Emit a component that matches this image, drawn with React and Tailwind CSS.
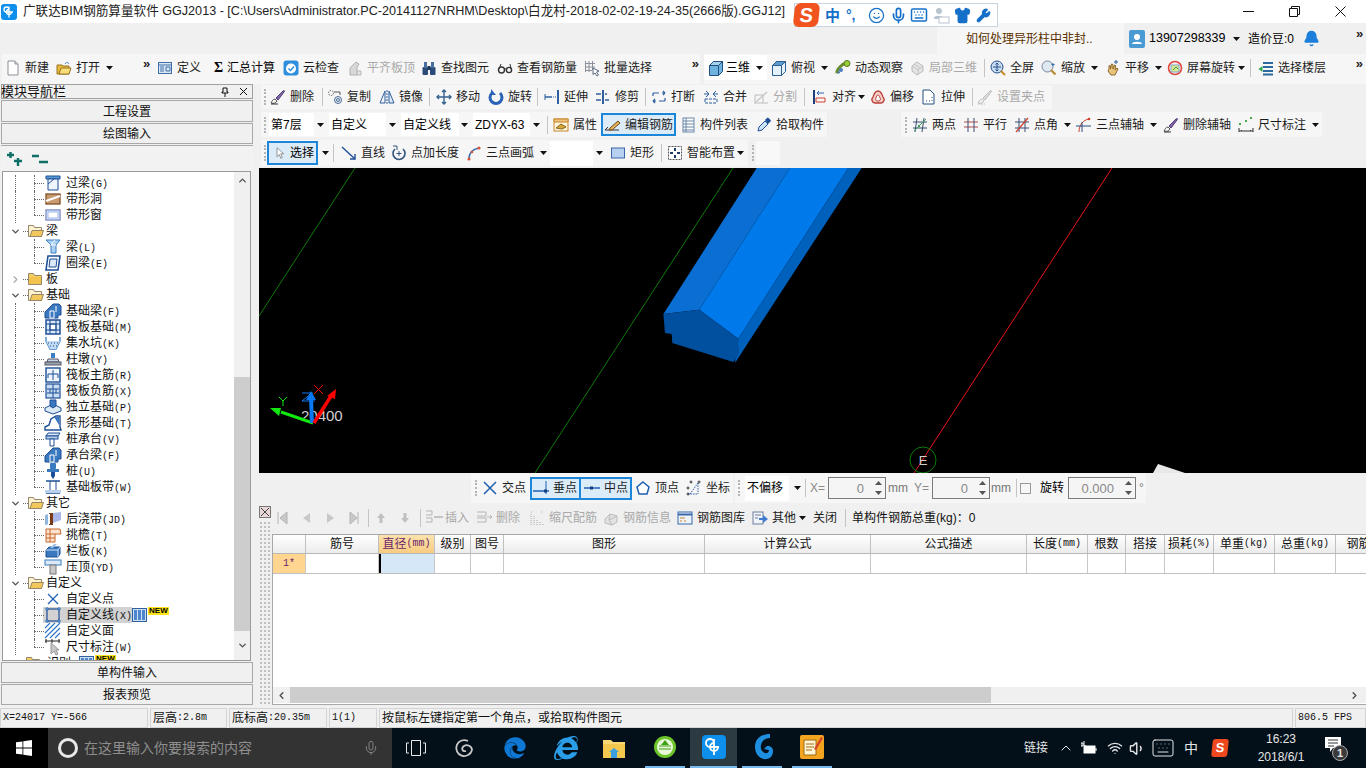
import React from "react";
import { ChevronDown, ChevronRight, ChevronUp, ChevronLeft, Wifi, Volume1, Keyboard, Mic, Bell, Smile, Shirt, Wrench } from "lucide-react";
import { FaEdge, FaInternetExplorer } from "react-icons/fa";

const B = "#2f5f9e";
const G = "#b5b5b5";

// toolbar icons, all on a 16x16 box
const IC = {
  new: <><path d="M3 1h7l3 3v11H3z" fill="#fff" stroke="#8a8f99" /><path d="M10 1v3h3" fill="#dde" stroke="#8a8f99" /></>,
  open: <><path d="M1 5h5l1 1h6v8H1z" fill="#e8b93c" stroke="#9a7420" /><path d="M3 14l2-6h10l-2 6z" fill="#f7dc7c" stroke="#9a7420" /><path d="M9 4c1-2 3-2 4 0" stroke="#3a7bd0" fill="none" /></>,
  define: <><rect x="1.5" y="2.5" width="13" height="11" fill="#dbe8f6" stroke="#3f6fa8" /><path d="M1.5 5h13M3 7h4M3 9h4M3 11h4M9 7h4v4H9z" stroke="#3f6fa8" fill="none" /></>,
  cloud: <><rect x="0.5" y="0.5" width="15" height="15" rx="3" fill="#2f8fdc" /><circle cx="8" cy="8.5" r="5" fill="#fff" /><path d="M5.5 8.5l2 2 3.5-4" stroke="#2f8fdc" strokeWidth="1.5" fill="none" /></>,
  flat: <><path d="M3 15V8l6-6 3 2-2 3v8z" fill="#d8d8d8" stroke="#b0b0b0" /><path d="M10 15v-4h4v4z" fill="#e4e4e4" stroke="#b8b8b8" /></>,
  binoc: <><rect x="1.5" y="7" width="5.5" height="8" rx="1" fill="#2b4c7a" /><rect x="9" y="7" width="5.5" height="8" rx="1" fill="#2b4c7a" /><rect x="3" y="2" width="3" height="6" fill="#4a6e9e" /><rect x="10" y="2" width="3" height="6" fill="#4a6e9e" /><rect x="6.5" y="6" width="3" height="4" fill="#1d3557" /></>,
  glass: <><circle cx="4.5" cy="10" r="3" fill="none" stroke="#333" strokeWidth="1.4" /><circle cx="12" cy="10" r="2.6" fill="none" stroke="#333" strokeWidth="1.4" /><path d="M7 9h2.5M2 9l2-5M14 9l-1-5" stroke="#333" fill="none" /></>,
  batch: <><path d="M1.5 1v11M5 1v11M8.5 1v9M1 3.5h10M1 7h10M1 10.5h7" stroke="#8a8f99" fill="none" /><path d="M9 8l6 3-2.5 1 2 3-1.5 1-2-3-2 1.5z" fill="#fff" stroke="#5a6a80" /></>,
  cube: <><path d="M1.5 5.5l4-4h9v10l-4 4h-9z" fill="#6fb2de" stroke="#22507e" /><path d="M1.5 5.5h9v10M10.5 5.5l4-4" fill="none" stroke="#22507e" /><path d="M1.5 5.5l4-4h9l-4 4z" fill="#a6d2ee" stroke="#22507e" /></>,
  top: <><path d="M1.5 5.5l4-4h9v10l-4 4h-9z" fill="#e4f0fa" stroke="#2d5f8f" /><path d="M1.5 5.5h9v10M10.5 5.5l4-4" fill="none" stroke="#2d5f8f" /><path d="M5.5 1.5l-4 4h9l4-4z" fill="#5c9bd0" stroke="#2d5f8f" /></>,
  orbit: <><path d="M2 13c-1-3 5-9 9-10" stroke="#6a8d2e" strokeWidth="3" fill="none" /><circle cx="12" cy="3.5" r="3" fill="#9ccd3a" stroke="#55761d" /><path d="M2 14l3-1-1-3z" fill="#3d6a9e" /><circle cx="6" cy="10" r="2" fill="#4d7dbd" /></>,
  orbit0: <><path d="M3 6l5-4 6 4v5l-6 4-5-4z" fill="#e4e4e4" stroke="#bcbcbc" /><path d="M3 6l6 4 5-4M9 10v5M5 4l6 4" stroke="#c4c4c4" fill="none" /></>,
  full: <><circle cx="7" cy="7" r="6" fill="#c7dbf2" stroke="#28508a" /><path d="M7 3v8M3 7h8M5.5 4.5L7 3l1.5 1.5M5.5 9.5L7 11l1.5-1.5" stroke="#28508a" fill="none" /><path d="M11 11l4 4" stroke="#c78b2a" strokeWidth="2" /></>,
  zoom: <><circle cx="6.5" cy="6.5" r="5.5" fill="#dfe7f0" stroke="#76889e" /><path d="M10 10l4.5 4.5" stroke="#b88a30" strokeWidth="2.2" /><path d="M12 3v3M10.5 4.5h3" stroke="#2f6ab0" /></>,
  pan: <><path d="M4 9V5.5l1.5.5V9l1-5 1.5.5L8 9l1.5-4 1.3.7L10 10l2-2 1 1-3 6H6L3 11z" fill="#e8c27a" stroke="#8c6a2d" /><path d="M11 0v4M9 2h4" stroke="#2f5f9e" /></>,
  rot: <><circle cx="8" cy="8" r="6.5" fill="none" stroke="#e0453a" strokeWidth="1.6" /><rect x="4" y="5" width="8" height="7" fill="#dbe58a" stroke="#7fa6cf" /><path d="M6 10l3-3 2 2" stroke="#3b9c58" fill="none" /></>,
  floor: <><path d="M5 3h10M5 7h10M5 11h10M5 14.5h10" stroke="#2b6a9e" strokeWidth="2" /><path d="M0.5 9l4-3v6z" fill="#2fa34f" /></>,
  brush: <><path d="M1 14c3 1 5 0 6-2l-2-2c-2 0-3 2-4 4z" fill="#f2f2f2" stroke="#555" /><path d="M6 9l7-7c1-1 2 0 1 1l-6 8z" fill="#8667ad" stroke="#4d3a70" /><path d="M1 15h7" stroke="#333" /></>,
  brush0: <><path d="M1 14c3 1 5 0 6-2l-2-2c-2 0-3 2-4 4z" fill="#eee" stroke="#c0c0c0" /><path d="M6 9l7-7c1-1 2 0 1 1l-6 8z" fill="#ddd" stroke="#bbb" /><path d="M1 15h7" stroke="#c0c0c0" strokeDasharray="2 1" /></>,
  copy: <><circle cx="4" cy="4" r="2.5" fill="none" stroke="#666" strokeDasharray="1.5 1" /><circle cx="11" cy="11" r="3.5" fill="#e8eef6" stroke="#4c6d95" /><circle cx="11" cy="11" r="1.5" fill="none" stroke="#4c6d95" /><path d="M7 3h6v3" stroke="#555" fill="none" /></>,
  mirror: <><path d="M6 2v12H1z" fill="none" stroke={B} /><path d="M10 2v12h5z" fill="#e0ebf6" stroke={B} /><path d="M8 1v14" stroke={B} strokeDasharray="2 1" /></>,
  move: <><path d="M8 1v14M1 8h14M6 3l2-2 2 2M6 13l2 2 2-2M3 6L1 8l2 2M13 6l2 2-2 2" stroke="#35628f" strokeWidth="1.4" fill="none" /></>,
  rotate: <><path d="M4 4a6 6 0 1 0 8 0" stroke="#2a62b8" strokeWidth="3" fill="none" /><path d="M3 0v6h5z" fill="#2a62b8" /></>,
  extend: <><path d="M1 8h7" stroke={B} strokeWidth="1.5" /><path d="M9 8h3" stroke={B} strokeDasharray="1 1" /><path d="M14 1v14" stroke={B} strokeWidth="2" /><path d="M1 5v6" stroke={B} /></>,
  trim: <><path d="M1 5h5M1 11h5M10 5h2M10 11h4" stroke={B} strokeWidth="1.4" /><path d="M8 1v14" stroke={B} strokeWidth="2" /></>,
  brk: <><path d="M2 4h6M11 4h3M14 4l-2-2M14 4l-2 2M2 4v3M2 12h3M8 12h6M14 12V9M2 12l2-2M2 12l2 2" stroke={B} fill="none" strokeWidth="1.2" /></>,
  merge: <><path d="M2 14h12M2 10h12M2 10v4M14 10v4" stroke={B} strokeDasharray="3 1" fill="none" /><path d="M3 2l3 3-3 3M13 2l-3 3 3 3M1 5h5M10 5h5" stroke={B} fill="none" /></>,
  split: <><path d="M1 14h14M2 14V6h8v8" stroke="#bdbdbd" fill="none" /><path d="M3 13l11-10" stroke="#c8c8c8" strokeWidth="1.5" /></>,
  align: <><path d="M2 1v14" stroke="#1f3f7a" strokeWidth="2" /><path d="M5 4h7M5 4l2-2M5 4l2 2" stroke="#2a62b8" fill="none" /><path d="M4 9h9v4H4z" fill="none" stroke="#d0402e" /></>,
  offset: <><path d="M8 2c3 0 4 3 5 6 2 2 1 6-2 6H5c-3 0-4-4-2-6 1-3 2-6 5-6z" fill="#f4d0cc" stroke="#bb4035" strokeWidth="1.3" /><path d="M8 6c1 0 2 2 2 3 1 1 0 3-1 3H7c-1 0-2-2-1-3 0-1 1-3 2-3z" fill="#fff" stroke="#bb4035" /></>,
  stretch: <><path d="M2 1h7l4 4v10H2z" fill="#fff" stroke="#22507e" /><path d="M11 8v1M11 11v1M8 12h1M5 12h1" stroke="#22507e" /></>,
  prop: <><rect x="1" y="2" width="14" height="12" fill="#fff4dc" stroke="#c8862a" /><path d="M1 2h14v3H1z" fill="#ecc27c" stroke="#c8862a" /><path d="M3 11l5-4 5 3-4 2z" fill="#d5a83a" stroke="#8a6520" /></>,
  edit: <><path d="M0 13h14" stroke="#333" /><path d="M0 13l3-3" stroke="#333" /><path d="M5 11l8-7 2 2-8 7-3 0z" fill="#e8b25a" stroke="#6a4a18" /></>,
  list: <><rect x="3" y="1" width="11" height="14" fill="#fff" stroke="#6a86a8" /><path d="M3 4h11M3 7h11M3 10h11M3 13h11M6 1v14" stroke="#6a86a8" /></>,
  drop: <><path d="M2 14l1-4 6-6 3 3-6 6z" fill="#cfe3f7" stroke="#1d4f96" /><path d="M9 3l2-2c1-1 3 1 4 3l-2 2-1 1z" fill="#1d4f96" /></>,
  two: <><path d="M1 5h14M1 11h14M5 1l-2 14M12 1l-2 14" stroke="#3a4f74" fill="none" /><path d="M2 14L14 2" stroke="#3f9e5a" /><circle cx="7" cy="9" r="1.2" fill="#3f9e5a" /></>,
  para: <><path d="M1 5h14M1 10h14" stroke="#b84a4a" /><path d="M5 1v14M11 1v14" stroke="#3a4f74" /></>,
  angle: <><path d="M1 5h14M1 11h14M5 1v14M11 1v14" stroke="#3a4f74" /><path d="M2 15L14 1" stroke="#d0402e" strokeWidth="1.2" /></>,
  arcax: <><path d="M3 15c0-7 4-12 10-13" stroke="#d0402e" fill="none" /><path d="M0 9h15M6 5v10" stroke="#2a4f80" /><circle cx="13" cy="2" r="1.3" fill="#d0402e" /></>,
  dim: <><path d="M1 14h14M1 11v4M15 11v4M3 14l1-1M13 14l-1-1" stroke="#333" fill="none" /><rect x="1" y="6" width="2" height="2" fill="#4aa64a" /><rect x="7" y="3" width="2" height="2" fill="#4aa64a" /><rect x="12" y="0" width="2" height="2" fill="#4aa64a" /></>,
  cursor: <path d="M4 1v12l3-3 2 5 2-1-2-5h4z" fill="#fff" stroke="#777" />,
  line: <><path d="M1 2l13 12" stroke="#1f4f96" strokeWidth="1.4" /><path d="M14 9v5H9" stroke="#1f4f96" fill="none" strokeWidth="1.4" /></>,
  pluslen: <><path d="M4 4a6 6 0 1 0 8 0" stroke="#33557f" strokeWidth="1.6" fill="none" /><path d="M2 1h4v4" stroke="#33557f" fill="none" /><path d="M8 6v5M5.5 8.5h5" stroke="#33557f" /></>,
  arc: <><path d="M3 14c0-6 4-10 10-11" stroke="#3a6fae" strokeWidth="1.5" fill="none" /><circle cx="3" cy="14" r="1.6" fill="#d8553c" /><circle cx="13" cy="3" r="1.6" fill="#d8553c" /><circle cx="6" cy="7" r="1.3" fill="#d8553c" /></>,
  rect: <rect x="1.5" y="3" width="13" height="10" fill="#b8d0f0" stroke="#3c66a8" />,
  smart: <><rect x="1.5" y="1.5" width="13" height="13" fill="#fff" stroke="#555" strokeDasharray="2 1" /><path d="M8 3v3M8 10v3M3 8h3M10 8h3" stroke="#1c3c6e" strokeWidth="2" /></>,
  cross: <path d="M2 2l12 12M14 2L2 14" stroke="#1f5fb0" strokeWidth="1.5" />,
  perp: <><path d="M0 11h16" stroke="#1f5fb0" strokeWidth="1.5" /><path d="M13 1v13" stroke="#1f5fb0" /><rect x="11" y="9.5" width="3" height="3" fill="#123f80" /></>,
  mid: <><path d="M0 8h16" stroke="#1f5fb0" strokeWidth="1.5" /><rect x="6" y="6.5" width="3" height="3" fill="#123f80" /></>,
  vertex: <path d="M8 2l6 5-2 7H4L2 7z" fill="#fff" stroke="#1f5fb0" strokeWidth="1.5" />,
  coord: <><path d="M2 14h10M4 14L12 3M12 3v11" stroke="#2f62a8" strokeDasharray="1.5 1" fill="none" /><circle cx="5" cy="2" r="1" fill="none" stroke="#333" /><circle cx="2" cy="8" r="1" fill="none" stroke="#333" /><circle cx="13" cy="2" r="1" fill="none" stroke="#333" /><circle cx="2" cy="14" r="1" fill="none" stroke="#333" /></>,
  ins: <><path d="M1 1h6v4H1M1 8h6v4H1" stroke={G} fill="none" /><path d="M9 7h9" stroke={G} strokeWidth="1.5" /></>,
  del: <><path d="M1 2h9v4H1M1 8h9v4H1" stroke={G} fill="none" /><path d="M11 7h5M14 5l2 2-2 2" stroke={G} fill="none" /></>,
  scale: <path d="M2 15V3M5 15V6M8 15V9M11 15v-4M14 15v-2M2 2h2M12 2h2" stroke="#aaa" strokeDasharray="1 1" fill="none" />,
  info: <><path d="M2 9l5-5 7 2v6l-5 3-7-2z" fill="#e2e2e2" stroke="#bbb" /><path d="M7 4l-1 6 3 5M6 10l8-4" stroke="#bbb" fill="none" /></>,
  lib: <><rect x="1" y="2" width="14" height="12" fill="#eef4fb" stroke="#3868a8" /><path d="M1 4.5h14" stroke="#3868a8" strokeWidth="2" /><path d="M3 8h5M3 11h2M7 11h2" stroke="#c8862a" /></>,
  other: <><rect x="1" y="2" width="10" height="12" fill="#f0f4fa" stroke="#6a7e9a" /><path d="M3 5h6M3 8h3" stroke="#6a7e9a" /><path d="M7 8h4V5l5 4-5 4v-3H7z" fill="#3f7bd0" /></>,
};

const Svg = ({ name, w = 16, h = 16 }) => (
  <svg viewBox="0 0 16 16" width={w} height={h} className="block shrink-0 overflow-visible">{IC[name]}</svg>
);

const Caret = ({ className = "" }) => (
  <svg width="7" height="4" viewBox="0 0 7 4" className={"block shrink-0 " + className}><path d="M0 0h7L3.5 4z" fill="#111" /></svg>
);

const Grip = ({ className = "" }) => <div className={"h-[16px] w-0 border-l-2 border-dotted border-[#b4b4b4] shrink-0 " + className} />;

const Sep = ({ w }) => (
  <div className={"h-[18px] shrink-0 " + w}><div className="h-full w-px bg-[#c4c4c4]" /></div>
);

const More = ({ className = "" }) => <span className={"text-[13px] leading-none font-bold text-[#222] shrink-0 " + className}>»</span>;

const Tool = ({ w, icon, label, gray, caret, caretMl = "ml-[6px]", className = "" }) => (
  <div className={"flex items-center shrink-0 whitespace-nowrap " + w + " " + (gray ? "text-[#a9a9a9] " : "text-[#1c1c1c] ") + className}>
    {icon && <span className="mr-[4px]"><Svg name={icon} /></span>}
    <span>{label}</span>
    {caret && <Caret className={caretMl} />}
  </div>
);

const Combo = ({ w1, w2, label }) => (
  <div className="flex items-center h-[23px] mr-[3px] shrink-0">
    <div className={"h-full bg-white flex items-center pl-[2px] " + w1}>{label}</div>
    <div className={"h-full bg-[#f6f6f6] flex items-center justify-center " + w2}><Caret /></div>
  </div>
);

const Mix = ({ t }) => (
  <>
    {t.split(/([\x00-\x7f]+)/).map((p, i) =>
      /^[\x00-\x7f]+$/.test(p)
        ? <span key={i} className="font-['Liberation_Mono',monospace] text-[10px]">{p}</span>
        : <span key={i}>{p}</span>
    )}
  </>
);

// tree icons
const TI = {
  lintel: <><path d="M1 1h14v3H1z" fill="#5b9bd5" stroke="#1d4f96" /><path d="M3 4h10v11H3z" fill="#eef5fc" stroke="#1d4f96" /><path d="M3 9l6-5" stroke="#1d4f96" /></>,
  hole: <><rect x="0" y="2" width="16" height="12" fill="#f3d8c8" /><rect x="1" y="3" width="14" height="10" fill="#c99a70" stroke="#6b3d1a" /><path d="M1 10l14-5" stroke="#fff" strokeWidth="2" /></>,
  win: <><rect x="0" y="2" width="16" height="12" fill="#f8d8d0" /><rect x="1" y="3" width="14" height="10" fill="#dfe9fb" stroke="#5c80cc" /><rect x="3" y="5" width="10" height="6" fill="#fff" stroke="#9fb8e8" /></>,
  beam: <><path d="M1 1h14l-4 5v8H6V6z" fill="#a8d0f0" stroke="#3b7fc4" /><path d="M6 6h5M10 1L6 6" stroke="#fff" /></>,
  ring: <><path d="M3 1h12l-2 14H1z" fill="#fff" stroke="#1d4f96" strokeWidth="1.6" /><path d="M5 4h7l-1 8H4z" fill="#dce9f7" stroke="#1d4f96" /></>,
  fbeam: <><path d="M0 15V9l8-8h6l2 2v9h-3v3z" fill="#3a78c0" stroke="#1d4f96" /><path d="M5 15V8h4v7zM11 3v6" stroke="#fff" fill="none" /></>,
  raft: <><rect x="1" y="1" width="14" height="14" fill="#dce9f7" stroke="#1d4f96" strokeWidth="1.5" /><rect x="5" y="5" width="6" height="6" fill="#fff" stroke="#1d4f96" /><path d="M1 5h14M1 11h14M5 1v14M11 1v14" stroke="#1d4f96" /></>,
  pit: <><path d="M1 2v4l4 8h6l4-8V2" fill="none" stroke="#3b7fc4" strokeWidth="1.3" /><path d="M1 6h14l-4 8H5z" fill="#bfdaf2" /><path d="M3 8h1M6 8h1M9 8h1M12 8h1M5 11h1M8 11h1M11 11h1" stroke="#1d4f96" /></>,
  pier: <><path d="M6 2h4v5H6z" fill="#3b7fc4" /><path d="M3 8h10l1 3H2z" fill="#c8d6e6" stroke="#556" /><rect x="0" y="11" width="16" height="3" fill="#9aa5b0" stroke="#556" /></>,
  main: <><rect x="1" y="1" width="14" height="14" fill="#eef5fc" stroke="#1d4f96" strokeWidth="1.4" /><path d="M8 3v10M3 7h10M3 7v4M13 7v4" stroke="#1d4f96" fill="none" /></>,
  neg: <><rect x="1" y="1" width="14" height="14" fill="#c9dcf2" stroke="#1d4f96" strokeWidth="1.2" /><path d="M8 1v14M2 6h12M2 10h12M5 6v4M11 6v4" stroke="#1d4f96" fill="none" /></>,
  ind: <><path d="M0 9l8-4 8 4v3l-8 3-8-3z" fill="#dce9f7" stroke="#1d4f96" /><path d="M5 7V1h6v6l-3 2z" fill="#3a78c0" stroke="#1d4f96" /></>,
  strip: <><path d="M0 15v-3l4-2 2-6 5-3 4 0v11l1 3z" fill="#fff" stroke="#1d4f96" strokeWidth="1.4" /><path d="M9 2l5 0v8z" fill="#3a78c0" /></>,
  cap: <><path d="M1 5l2-3h12l-2 3z" fill="#dce9f7" stroke="#1d4f96" /><rect x="1" y="5" width="12" height="3" fill="#b8d0ea" stroke="#1d4f96" /><path d="M5 8h4v7H5z" fill="#fff" stroke="#1d4f96" /></>,
  pile: <><rect x="5" y="0" width="6" height="6" rx="1" fill="#3a78c0" /><path d="M2 6h12v3H2z" fill="#3a78c0" /><path d="M6 9h4v4l-2 3-2-3z" fill="#1d4f96" /></>,
  band: <><path d="M1 2h14M1 14h14" stroke="#1d4f96" strokeWidth="1.6" /><path d="M5 2v12M11 2v12" stroke="#1d4f96" /><path d="M0 11h16v3H0z" fill="#b8d0ea" /></>,
  post: <><path d="M0 4l8-2v10l-8 2z" fill="#8fb6dd" /><path d="M8 2l8-1v8l-8 3z" fill="#a8b8e8" /><rect x="4" y="2" width="4" height="12" fill="#7a3b18" /><rect x="3" y="3" width="2" height="10" fill="#fff" /></>,
  eave: <><path d="M1 2h14l1 5h-6v8H1z" fill="#fbe3d0" stroke="#c8672a" /><path d="M1 7h9M1 11h9M5 2v13" stroke="#c8672a" /></>,
  rail: <><path d="M1 7l3-3h11v7l-2 3H1z" fill="#3a78c0" stroke="#1d4f96" /><path d="M1 7h12v7M13 7l2-3" stroke="#cfe3f7" fill="none" /><path d="M5 5l4-4h3L8 5z" fill="#9ac0e8" /></>,
  press: <><rect x="0" y="1" width="16" height="5" fill="#dbe9f8" stroke="#3b7fc4" /><rect x="5" y="6" width="6" height="9" fill="#c8c8c8" stroke="#777" /></>,
  pt: <path d="M3 3l10 10M13 3L3 13" stroke="#1d5fb0" strokeWidth="1.2" />,
  ln: <><rect x="2" y="2" width="12" height="12" fill="none" stroke="#1d4f96" strokeWidth="1.2" /><path d="M1 1h2v2H1zM13 1h2v2h-2zM1 13h2v2H1zM13 13h2v2h-2z" fill="#fff" stroke="#1d5fb0" /></>,
  face: <path d="M0 5l5-5M0 10L10 0M0 15L15 0M5 15L15 5M10 15l5-5" stroke="#2a72c8" strokeWidth="1.1" />,
  dimt: <><path d="M0 2h15M1 0v4M7 0v4M14 0v4" stroke="#222" /><path d="M6 4v11l3-3 2 4 2-1-2-4h3z" fill="#c8c8c8" stroke="#999" /></>,
};

const Folder = ({ open }) => (
  <svg width="16" height="14" viewBox="0 0 16 14" className="block shrink-0">
    <path d="M0.5 1.5h5l1 2h7v9h-13z" fill={open ? "#fff3cf" : "#f3cf63"} stroke="#97876a" />
    {open
      ? <path d="M2 12.5l2-6h11.500l-2 6z" fill="#f4c75a" stroke="#97876a" />
      : <path d="M1 5h12v7H1z" fill="#f2c44d" />}
  </svg>
);

const guide = "border-l border-dotted border-[#6a6a6a]";

const Child = ({ icon, t, g1 = true, last, sel, extra }) => (
  <div className="flex items-center h-[16px] whitespace-nowrap">
    <div className="w-[12px] shrink-0" />
    <div className={"w-[19px] h-full shrink-0 " + (g1 ? guide : "")} />
    <div className="w-[11px] h-full shrink-0 relative">
      <div className={"h-1/2 " + guide} />
      {!last && <div className={"h-1/2 " + guide} />}
      <div className="absolute left-0 top-1/2 w-[10px] border-t border-dotted border-[#6a6a6a]" />
    </div>
    <div className={"flex items-center h-full " + (sel ? "bg-[#d2d2d2] -ml-[2px] pl-[2px]" : "")}>
      <svg width="16" height="16" viewBox="0 0 16 16" className="block shrink-0 overflow-visible">{TI[icon]}</svg>
      <span className="ml-[5px] text-[#111]"><Mix t={t} /></span>
    </div>
    {extra}
  </div>
);

const NewTag = () => (
  <>
    <div className="w-[15px] h-[14px] border border-[#2f5f9e] bg-[#cfe0f5] flex justify-around px-px py-px shrink-0">
      <div className="w-[3px] bg-[#4d86cc]" /><div className="w-[3px] bg-[#4d86cc]" /><div className="w-[3px] bg-[#4d86cc]" />
    </div>
    <span className="ml-px -translate-y-[4px] bg-[#ffe31a] text-black text-[8px] leading-[8px] font-bold px-px font-['Liberation_Sans',sans-serif]">NEW</span>
  </>
);

const Group = ({ t, open = true }) => (
  <div className="flex items-center h-[16px] whitespace-nowrap">
    <div className="w-[7px] shrink-0" />
    {open
      ? <ChevronDown size={11} strokeWidth={3} className="shrink-0 text-[#505050]" />
      : <ChevronRight size={11} strokeWidth={3} className="shrink-0 text-[#b0b0b0]" />}
    <div className="w-[5px] ml-[2px] border-t border-dotted border-[#6a6a6a] shrink-0" />
    <Folder open={open} />
    <span className="ml-[2px] text-[#111]">{t}</span>
  </div>
);

const PanelBtn = ({ t, h }) => (
  <div className={"flex items-center justify-center border border-[#a8a8a8] bg-[#f0f0f0] text-[#111] mx-px mb-px pt-px " + h}>{t}</div>
);

const NavTree = () => (
  <div className="w-[254px] shrink-0 flex flex-col h-[622px]">
    <div className="h-[15px] border border-[#a0a0a0] mx-px flex items-center justify-between pr-[4px] text-[#111] text-[13px] leading-none mb-[1px]">
      <span className="-ml-[1px]">模块导航栏</span>
      <div className="flex items-center gap-[10px]">
        <svg width="8" height="10" viewBox="0 0 8 10"><path d="M2 1h4v4h1v1H1V5h1zM4 6v4" stroke="#111" fill="none" /></svg>
        <svg width="9" height="9" viewBox="0 0 9 9"><path d="M1 1l7 7M8 1L1 8" stroke="#111" /></svg>
      </div>
    </div>
    <PanelBtn t="工程设置" h="h-[22px]" />
    <PanelBtn t="绘图输入" h="h-[21px]" />
    <div className="h-[26px] mx-px flex items-center gap-[7px] pl-[5px] border-t border-[#a8a8a8] bg-[#f2f2f2]">
      <svg width="18" height="16" viewBox="0 0 18 16"><path d="M1 4h7M4.500 1v6M8 10h8M12 7v8" stroke="#0f6f66" strokeWidth="2.400" /></svg>
      <svg width="18" height="16" viewBox="0 0 18 16"><path d="M1 5h7M8 11h9" stroke="#0f6f66" strokeWidth="2.400" /></svg>
    </div>
    <div className="flex-1 min-h-0 ml-[2px] mr-[3px] border border-[#9a9a9a] bg-white flex overflow-hidden">
      <div className="flex-1 min-w-0 pt-[3px] overflow-hidden">
        <Child icon="lintel" t="过梁(G)" />
        <Child icon="hole" t="带形洞" />
        <Child icon="win" t="带形窗" last />
        <Group t="梁" />
        <Child icon="beam" t="梁(L)" g1={false} />
        <Child icon="ring" t="圈梁(E)" g1={false} last />
        <Group t="板" open={false} />
        <Group t="基础" />
        <Child icon="fbeam" t="基础梁(F)" />
        <Child icon="raft" t="筏板基础(M)" />
        <Child icon="pit" t="集水坑(K)" />
        <Child icon="pier" t="柱墩(Y)" />
        <Child icon="main" t="筏板主筋(R)" />
        <Child icon="neg" t="筏板负筋(X)" />
        <Child icon="ind" t="独立基础(P)" />
        <Child icon="strip" t="条形基础(T)" />
        <Child icon="cap" t="桩承台(V)" />
        <Child icon="fbeam" t="承台梁(F)" />
        <Child icon="pile" t="桩(U)" />
        <Child icon="band" t="基础板带(W)" last />
        <Group t="其它" />
        <Child icon="post" t="后浇带(JD)" />
        <Child icon="eave" t="挑檐(T)" />
        <Child icon="rail" t="栏板(K)" />
        <Child icon="press" t="压顶(YD)" last />
        <Group t="自定义" />
        <Child icon="pt" t="自定义点" />
        <Child icon="ln" t="自定义线(X)" sel extra={<NewTag />} />
        <Child icon="face" t="自定义面" />
        <Child icon="dimt" t="尺寸标注(W)" last />
        <div className="flex items-center h-[16px] whitespace-nowrap">
          <div className="w-[23px] shrink-0" /><Folder open={false} /><span className="ml-[5px] text-[#111]">识别</span>
          <span className="ml-[8px] flex items-center"><NewTag /></span>
        </div>
      </div>
      <div className="w-[16px] shrink-0 bg-[#f0f0f0] flex flex-col items-center">
        <div className="h-[205px] w-full pt-[3px] flex justify-center"><ChevronUp size={11} strokeWidth={3} className="text-[#505050]" /></div>
        <div className="h-[254px] w-full bg-[#cdcdcd]" />
        <div className="flex-1 w-full flex items-center justify-center"><ChevronDown size={11} strokeWidth={3} className="text-[#505050]" /></div>
      </div>
    </div>
    <div className="mt-px" />
    <PanelBtn t="单构件输入" h="h-[21px]" />
    <PanelBtn t="报表预览" h="h-[21px]" />
  </div>
);

const Canvas = () => (
  <svg width="1107" height="305" viewBox="0 0 1107 305" className="block bg-black shrink-0">
    <path d="M96 0L0 148" stroke="#0c7a0c" fill="none" />
    <path d="M474 0L276 305" stroke="#0c7a0c" fill="none" />
    <path d="M853 0L655 305" stroke="#e8141a" fill="none" />
    <polygon points="497.700,0 531,0 440.300,141.700 404.400,146" fill="#0a6ed2" />
    <polygon points="531,0 589.300,0 479.300,170.700 440.300,141.700" fill="#0079ea" />
    <polygon points="589.300,0 602.700,0 476,195 479.300,170.700" fill="#0061bd" />
    <polygon points="404.400,146 440.300,141.700 479.300,170.700 480,186.700 474.300,194 413.300,175 412.700,166 406,165" fill="#00509f" />
    <circle cx="664" cy="292" r="13" fill="none" stroke="#0c7a0c" />
    <text x="664" y="297" textAnchor="middle" fontSize="13" fill="#cfcfcf" fontFamily="Liberation Sans, sans-serif">E</text>
    <polygon points="894,305 899,296 926,305" fill="#e8e8e8" />
    <text x="42" y="253" fontSize="15" fill="#d0d0d0" fontFamily="Liberation Sans, sans-serif">20400</text>
    <path d="M22 244l32 11" stroke="#10e810" strokeWidth="3" />
    <polygon points="11,240 22,240 20,248" fill="#10e810" />
    <path d="M53 255l-1-25" stroke="#0a78f0" strokeWidth="4" />
    <polygon points="52,223 47,232 57,232" fill="#0a78f0" />
    <path d="M55 255l17-27" stroke="#f00" strokeWidth="3.500" />
    <polygon points="77,221 68,228 76,231" fill="#f00" />
    <path d="M20 229l4 4 4-4M24 233v5" stroke="#10e810" fill="none" />
    <path d="M55 217l9 9M64 217l-9 9" stroke="#f00" fill="none" />
    <path d="M43 225h11M43 233l10-8M43 233h13" stroke="#0a78f0" fill="none" />
  </svg>
);

const Num = ({ w, v }) => (
  <div className={"h-[22px] border border-[#7a7a7a] bg-[#f5f5f5] flex items-center justify-end shrink-0 text-[#8a8a8a] text-[13px] " + w}>
    <span>{v}</span>
    <div className="w-[14px] ml-[7px] flex flex-col items-center gap-[6px]">
      <svg width="7" height="4" viewBox="0 0 7 4"><path d="M0 4h7L3.500 0z" fill="#555" /></svg>
      <svg width="7" height="4" viewBox="0 0 7 4"><path d="M0 0h7L3.500 4z" fill="#555" /></svg>
    </div>
  </div>
);

const SnapBar = () => (
  <div className="h-[32px] shrink-0 flex pl-[212px] items-start">
    <div className="h-[30px] w-[262px] bg-[#f6f6f6] flex items-center pl-[4px] shrink-0">
      <Grip />
      <div className="w-[5px]" />
      <Tool w="w-[48px]" icon="cross" label="交点" />
      <div className="h-[23px] w-[51px] border-2 border-[#1c86d8] bg-[#dcebf8] flex items-center pl-[1px] shrink-0"><Tool w="" icon="perp" label="垂点" /></div>
      <div className="h-[23px] w-[51px] border-2 border-l-0 border-[#1c86d8] bg-[#dcebf8] flex items-center pl-[3px] shrink-0"><Tool w="" icon="mid" label="中点" /></div>
      <Tool w="w-[54px] pl-[3px]" icon="vertex" label="顶点" />
      <Tool w="w-[44px]" icon="coord" label="坐标" />
    </div>
    <div className="h-[30px] bg-[#f6f6f6] flex items-center ml-[2px] pl-[3px] flex-1 mr-[220px] min-w-0">
      <Grip />
      <div className="w-[5px]" />
      <div className="w-[44px] h-[25px] bg-white flex items-center pl-[2px] shrink-0">不偏移</div>
      <div className="w-[16px] flex justify-center shrink-0 -ml-[1px]"><Caret className="ml-[3px]" /></div>
      <div className="h-[18px] w-px bg-[#c4c4c4] ml-[1px] mr-[4px] shrink-0" />
      <span className="w-[18px] text-[#8a8a8a] shrink-0">X=</span>
      <Num w="w-[58px]" v="0" />
      <span className="w-[28px] pl-[2px] text-[#777] shrink-0">mm</span>
      <span className="w-[18px] text-[#8a8a8a] shrink-0">Y=</span>
      <Num w="w-[58px]" v="0" />
      <span className="w-[26px] pl-px text-[#777] shrink-0">mm</span>
      <div className="h-[18px] w-px bg-[#c4c4c4] mr-[3px] shrink-0" />
      <div className="w-[11px] h-[11px] border border-[#999] bg-[#f6f6f6] mr-[9px] shrink-0" />
      <span className="w-[28px] shrink-0">旋转</span>
      <Num w="w-[68px]" v="0.000" />
      <span className="ml-[3px] text-[#777] shrink-0">°</span>
    </div>
  </div>
);

const COLS = [
  ["w-[33px]", ""], ["w-[73px]", "筋号"], ["w-[56px]", "直径(mm)"], ["w-[36px]", "级别"], ["w-[33px]", "图号"],
  ["w-[201px]", "图形"], ["w-[166px]", "计算公式"], ["w-[156px]", "公式描述"], ["w-[61px]", "长度(mm)"], ["w-[38px]", "根数"],
  ["w-[39px]", "搭接"], ["w-[49px]", "损耗(%)"], ["w-[61px]", "单重(kg)"], ["w-[61px]", "总重(kg)"], ["w-[46px]", "钢筋"],
];

const GridPanel = () => (
  <div className="flex h-[201px] shrink-0">
    <div className="w-[13px] shrink-0 flex flex-col">
      <svg width="13" height="13" viewBox="0 0 13 13" className="shrink-0 mt-px"><rect x="0.500" y="0.500" width="11" height="11" fill="#e8d8d8" stroke="#777" /><path d="M2 2l8 8M10 2l-8 8" stroke="#444" /></svg>
      <div className="flex-1 mt-[2px] mr-[2px] bg-[radial-gradient(#c0c0c0_1px,transparent_1.2px)] bg-[length:4px_4px]" />
    </div>
    <div className="flex-1 min-w-0 flex flex-col">
      <div className="h-[29px] shrink-0 flex items-center pl-[4px] pb-[3px] whitespace-nowrap">
        <svg width="92" height="14" viewBox="0 0 92 14" className="shrink-0">
          <path d="M2 1v12M11 1v12L4 7z" fill="#c8c8c8" stroke="#b4b4b4" /><path d="M34 2v10l-7-5z" fill="#c8c8c8" /><path d="M51 2v10l7-5z" fill="#c8c8c8" /><path d="M74 1v12l7-6zM82 1v12" fill="#c8c8c8" stroke="#b4b4b4" />
        </svg>
        <div className="h-[18px] w-px bg-[#c4c4c4] mr-[7px] shrink-0" />
        <svg width="38" height="12" viewBox="0 0 38 12" className="shrink-0 mr-[6px]"><path d="M5 1L1 6h2.500v5h3V6H9zM29 11l4-5h-2.500V1h-3v5H25z" fill="#c0c0c0" /></svg>
        <div className="h-[18px] w-px bg-[#c4c4c4] shrink-0 mr-[2px]" />
        <Tool w="w-[53px] pl-[2px]" label="插入" icon="ins" gray />
        <Tool w="w-[53px]" label="删除" icon="del" gray />
        <Tool w="w-[74px]" label="缩尺配筋" icon="scale" gray />
        <Tool w="w-[74px]" label="钢筋信息" icon="info" gray />
        <Tool w="w-[75px]" label="钢筋图库" icon="lib" />
        <Tool w="w-[61px]" label="其他" icon="other" caret caretMl="ml-[3px]" />
        <Tool w="w-[32px]" label="关闭" />
        <div className="h-[18px] w-px bg-[#c4c4c4] mr-[6px] shrink-0" />
        <span className="text-[#111]">单构件钢筋总重(kg)：0</span>
      </div>
      <div className="flex-1 min-h-0 border-t border-l border-b border-[#a8a8a8] mb-px bg-white flex flex-col overflow-hidden">
        <div className="flex h-[19px] shrink-0 border-b border-[#b8b8b8]">
          {COLS.map(([w, t], i) => (
            <div key={i} className={"h-full shrink-0 border-r border-[#c0c0c0] flex items-center justify-center whitespace-nowrap overflow-hidden " + w + " " + (i === 2 ? "bg-linear-to-b from-[#fbe2ad] to-[#f8cc82] text-[#6b1f6b]" : "bg-linear-to-b from-white to-[#ececec] text-[#111]")}>
              <Mix t={t} />
            </div>
          ))}
        </div>
        <div className="flex h-[20px] shrink-0 border-b border-[#c0c0c0]">
          {COLS.map(([w], i) => (
            <div key={i} className={"h-full shrink-0 border-r border-[#c8c8c8] flex items-center justify-center " + w + " " + (i === 0 ? "bg-[#ffd590] text-[#6b1f6b]" : i === 2 ? "bg-[#d6e8f8] border-l-2 border-l-black" : "")}>
              {i === 0 && <Mix t="1*" />}
            </div>
          ))}
        </div>
        <div className="flex-1" />
        <div className="h-[16px] mb-px shrink-0 bg-[#f0f0f0] flex items-center">
          <div className="w-[17px] flex justify-center shrink-0"><ChevronLeft size={11} strokeWidth={3} className="text-[#505050]" /></div>
          <div className="w-[701px] h-full bg-[#cdcdcd] shrink-0" />
          <div className="flex-1" />
          <div className="w-[24px] flex justify-center shrink-0"><ChevronRight size={11} strokeWidth={3} className="text-[#505050]" /></div>
        </div>
      </div>
    </div>
  </div>
);

const Toolbars = () => (
  <div className="h-[84px] shrink-0 flex flex-col pt-px">
    <div className="h-[24px] w-[791px] ml-[2px] bg-[#f6f6f6] flex items-center pl-[3px] shrink-0">
      <Grip />
      <div className="w-[4px] shrink-0" />
      <Tool w="w-[52px]" icon="brush" label="删除" />
      <Sep w="w-[5px]" />
      <Tool w="w-[52px]" icon="copy" label="复制" />
      <Tool w="w-[50px]" icon="mirror" label="镜像" />
      <Sep w="w-[7px]" />
      <Tool w="w-[52px]" icon="move" label="移动" />
      <Tool w="w-[49px]" icon="rotate" label="旋转" />
      <Sep w="w-[7px]" />
      <Tool w="w-[51px]" icon="extend" label="延伸" />
      <Tool w="w-[50px]" icon="trim" label="修剪" />
      <Sep w="w-[6px]" />
      <Tool w="w-[52px]" icon="brk" label="打断" />
      <Tool w="w-[50px]" icon="merge" label="合并" />
      <Tool w="w-[51px]" icon="split" label="分割" gray />
      <Sep w="w-[8px]" />
      <Tool w="w-[58px]" icon="align" label="对齐" caret caretMl="ml-[2px]" />
      <Tool w="w-[51px]" icon="offset" label="偏移" />
      <Tool w="w-[51px]" icon="stretch" label="拉伸" />
      <Sep w="w-[5px]" />
      <Tool w="w-[68px]" icon="brush0" label="设置夹点" gray />
    </div>
    <div className="h-[25px] mt-[3px] flex shrink-0 pl-[2px]">
      <div className="w-[566px] h-full bg-[#f6f6f6] flex items-center pl-[3px] shrink-0">
        <Grip />
        <div className="w-[3px] shrink-0" />
        <Combo w1="w-[45px]" w2="w-[12px]" label="第7层" />
        <Combo w1="w-[57px]" w2="w-[12px]" label="自定义" />
        <Combo w1="w-[58px]" w2="w-[11px]" label="自定义线" />
        <Combo w1="w-[57px]" w2="w-[12px]" label="ZDYX-63" />
        <Sep w="w-[6px] ml-[2px]" />
        <Tool w="w-[48px]" icon="prop" label="属性" />
        <div className="w-[75px] h-[23px] border-2 border-[#1c86d8] bg-[#dcebf8] flex items-center shrink-0 pl-[2px]"><Tool w="" icon="edit" label="编辑钢筋" /></div>
        <div className="w-[4px] shrink-0" />
        <Tool w="w-[76px]" icon="list" label="构件列表" />
        <Tool w="w-[70px]" icon="drop" label="拾取构件" />
      </div>
      <div className="w-[421px] h-full ml-[74px] bg-[#f6f6f6] flex items-center pl-[4px] shrink-0">
        <Grip />
        <div className="w-[5px] shrink-0" />
        <Tool w="w-[51px]" icon="two" label="两点" />
        <Tool w="w-[51px]" icon="para" label="平行" />
        <Tool w="w-[62px]" icon="angle" label="点角" caret />
        <Tool w="w-[87px]" icon="arcax" label="三点辅轴" caret />
        <Tool w="w-[75px]" icon="brush" label="删除辅轴" />
        <Tool w="w-[80px]" icon="dim" label="尺寸标注" caret />
      </div>
    </div>
    <div className="h-[26px] mt-[3px] flex shrink-0 pl-[2px]">
      <div className="w-[487px] h-full bg-[#f6f6f6] flex items-center pl-[3px] shrink-0">
        <Grip />
        <div className="h-[24px] w-[51px] ml-[1px] border-2 border-[#1c86d8] bg-[#dcebf8] flex items-center pl-[5px] shrink-0">
          <Svg name="cursor" w={12} h={14} />
          <span className="ml-[4px]">选择</span>
        </div>
        <div className="w-[14px] flex justify-center shrink-0"><Caret /></div>
        <Sep w="w-[8px] ml-px" />
        <Tool w="w-[50px]" icon="line" label="直线" />
        <Tool w="w-[75px]" icon="pluslen" label="点加长度" />
        <Tool w="w-[84px]" icon="arc" label="三点画弧" caret />
        <div className="w-[43px] h-[25px] bg-white shrink-0" />
        <div className="w-[13px] h-[25px] bg-[#f6f6f6] flex items-center justify-center shrink-0"><Caret /></div>
        <div className="w-[4px] shrink-0" />
        <Tool w="w-[51px]" icon="rect" label="矩形" />
        <Sep w="w-[6px]" />
        <Tool w="w-[80px]" icon="smart" label="智能布置" caret caretMl="ml-[2px]" />
      </div>
      <div className="ml-[4px] flex items-center">
        <Grip />
        <div className="w-[24px] h-[24px] ml-[2px] bg-[#f8f8f8]" />
      </div>
    </div>
  </div>
);

const StatusCell = ({ w, children, className = "" }) => (
  <div className={"h-full border border-[#d4d4d4] flex items-center pl-[2px] shrink-0 whitespace-nowrap text-[#111] " + w + " " + className}>{children}</div>
);

const WinBtn = ({ w = "w-[48px]", children, className = "" }) => (
  <div className={"h-full flex items-center justify-center shrink-0 " + w + " " + className}>{children}</div>
);

const Underlined = ({ w, u, bg = "", children }) => (
  <div className={"h-full flex flex-col items-center shrink-0 " + w + " " + bg}>
    <div className="flex-1 flex items-center justify-center">{children}</div>
    <div className={"h-[2px] bg-[#76b9ed] " + u} />
  </div>
);

const Taskbar = () => (
  <div className="h-[40px] bg-[#03101a] flex items-center text-white shrink-0">
    <WinBtn className="bg-black">
      <svg width="16" height="16" viewBox="0 0 16 16"><path d="M0 2.300l6.500-.9v6.200H0zM7.300 1.300L16 0v7.600H7.300zM0 8.400h6.500v6.200L0 13.700zM7.300 8.400H16V16l-8.700-1.200z" fill="#fff" /></svg>
    </WinBtn>
    <div className="w-[344px] h-full bg-[#333] flex items-center pl-[10px] shrink-0">
      <div className="w-[20px] h-[20px] rounded-full border-[3px] border-[#e8e8e8] shrink-0" />
      <span className="ml-[6px] text-[14px] text-[#8e8e8e] whitespace-nowrap">在这里输入你要搜索的内容</span>
      <Mic size={16} strokeWidth={1.300} className="ml-auto mr-[13px] text-[#8e8e8e]" />
    </div>
    <WinBtn>
      <svg width="20" height="16" viewBox="0 0 20 16"><path d="M5.500.5h9v15h-9zM3 3H.5v10H3M17 3h2.500v10H17" fill="none" stroke="#e8e8e8" /></svg>
    </WinBtn>
    <WinBtn w="w-[47px]">
      <svg width="20" height="20" viewBox="0 0 20 20"><path d="M14 3a8 8 0 1 0 4 9c0-4-5-6-8-4s-2 6 2 5" fill="none" stroke="#c8c8c8" strokeWidth="1.800" /></svg>
    </WinBtn>
    <WinBtn w="w-[55px]"><FaEdge size={22} className="text-[#0f78d4]" /></WinBtn>
    <WinBtn w="w-[47px]"><FaInternetExplorer size={24} className="text-[#2a9ee8]" /></WinBtn>
    <WinBtn w="w-[50px]">
      <svg width="22" height="20" viewBox="0 0 22 20"><path d="M0 2h8l2 2h12v16H0z" fill="#f8d775" /><path d="M0 6h22v14H0z" fill="#f3c84f" /><path d="M8 20v-6h6v6zM6 14l5-4 5 4z" fill="#3aa0e0" /></svg>
    </WinBtn>
    <Underlined w="w-[51px]" u="w-[40px]">
      <svg width="22" height="22" viewBox="0 0 22 22"><circle cx="11" cy="11" r="11" fill="#6dc52c" /><circle cx="11" cy="11" r="8" fill="#e8f8d8" /><path d="M5 10h12M5 13h12" stroke="#3ea016" /><path d="M11 4l4 5H7z" fill="#3ea016" /></svg>
    </Underlined>
    <Underlined w="w-[47px]" u="w-full" bg="bg-[#2c3a42]">
      <svg width="24" height="24" viewBox="0 0 24 24"><rect width="24" height="24" rx="4" fill="#0f8fec" /><path d="M12 4v16M8 12a4 4 0 1 1 4-4M16 12a4 4 0 1 1-4-4M7 12h10" fill="none" stroke="#fff" strokeWidth="1.800" /></svg>
    </Underlined>
    <Underlined w="w-[50px]" u="w-[40px]">
      <svg width="24" height="28" viewBox="0 0 24 28"><path d="M20 1c-9 0-15 5-15 13 0 8 6 13 12 12 4-1 6-4 6-8 0-3-2-5-6-5l-3 3 5 1c0 2-2 4-4 3-3-1-5-4-4-8 1-5 5-7 9-7z" fill="#1e8fe0" /></svg>
    </Underlined>
    <Underlined w="w-[49px]" u="w-[40px]">
      <svg width="24" height="24" viewBox="0 0 24 24"><rect width="24" height="24" rx="2" fill="#f3a51f" /><path d="M4 5h12v15H4z" fill="#fff6d8" stroke="#a06a10" /><path d="M6 9h8M6 12h8M6 15h6" stroke="#a06a10" /><path d="M14 14L21 2l2 1-7 12z" fill="#d8402a" /></svg>
    </Underlined>
    <div className="flex-1 flex items-center h-full pl-[188px] text-[#e6e6e6]">
      <span className="text-[12px] w-[31px] shrink-0">链接</span>
      <ChevronUp size={16} strokeWidth={1.500} className="ml-[3px] shrink-0" />
      <svg width="16" height="14" viewBox="0 0 16 14" className="ml-[7px] shrink-0"><path d="M0 2h2v3H0zM3 0v5M3 5h2" stroke="#fff" fill="none" /><rect x="3" y="5" width="11" height="7" fill="#fff" stroke="#fff" /><path d="M15 7v3" stroke="#fff" /></svg>
      <Wifi size={16} className="ml-[10px] shrink-0" />
      <Volume1 size={17} className="ml-[6px] shrink-0" />
      <Keyboard size={24} strokeWidth={1} className="ml-[5px] shrink-0" />
      <span className="ml-[9px] text-[14px] w-[15px] shrink-0">中</span>
      <span className="ml-[13px] w-[16px] h-[18px] rounded-[3px] bg-[#f0481e] text-white text-[13px] leading-[18px] font-bold text-center shrink-0 -skew-x-6">S</span>
      <div className="ml-[26px] w-[54px] flex flex-col items-center leading-[18px] text-[12px] shrink-0">
        <span>16:23</span>
        <span className="whitespace-nowrap">2018/6/1</span>
      </div>
      <div className="ml-[17px] relative w-[16px] h-[16px] shrink-0 -translate-y-[3px]">
        <svg width="16" height="16" viewBox="0 0 16 16"><path d="M0 0h16v11H8l-3 4v-4H0z" fill="#fff" /><path d="M3 3h10M3 6h10M3 9h6" stroke="#333" /></svg>
        <span className="absolute left-[7px] top-[8px] w-[16px] h-[16px] rounded-full bg-[#3a3a3a] border border-[#aaa] text-[11px] leading-[14px] text-center font-bold">1</span>
      </div>
    </div>
  </div>
);

export default function App() {
  return (
    <div className="relative w-[1366px] h-[768px] overflow-hidden bg-[#f0f0f0] flex flex-col text-[12px] leading-none font-['Liberation_Sans','Noto_Sans_CJK_SC',sans-serif]">
      {/* title bar */}
      <div className="h-[23px] shrink-0 bg-white flex items-center whitespace-nowrap">
        <svg width="16" height="16" viewBox="0 0 16 16" className="ml-px shrink-0"><rect width="16" height="16" rx="3" fill="#0f8fec" /><path d="M8 2.500v11M5.500 8a2.500 2.500 0 1 1 2.500-2.500M10.500 8A2.500 2.500 0 1 1 8 5.500M4 8h8" fill="none" stroke="#fff" strokeWidth="1.300" /></svg>
        <span className="ml-[6px] text-[12.600px] text-[#222] w-[770px] shrink-0">广联达BIM钢筋算量软件 GGJ2013 - [C:\Users\Administrator.PC-20141127NRHM\Desktop\白龙村-2018-02-02-19-24-35(2666版).GGJ12]</span>
        <div className="ml-auto flex items-center h-full">
          <svg width="11" height="1" className="mr-[35px]"><rect width="11" height="1" fill="#111" /></svg>
          <svg width="11" height="11" viewBox="0 0 11 11" className="mr-[35px]"><path d="M.5 2.500h8v8h-8zM2.500 2.500v-2h8v8h-2" fill="none" stroke="#111" /></svg>
          <svg width="11" height="11" viewBox="0 0 11 11" className="mr-[20px]"><path d="M.5.500l10 10M10.500.500l-10 10" stroke="#111" /></svg>
        </div>
      </div>

      {/* sogou input bar */}
      <div className="absolute left-[794px] top-[3px] w-[204px] h-[24px] bg-white border border-[#c8d4e0] flex items-center">
        <div className="w-[25px] h-[24px] -ml-px rounded-[6px] bg-[#f0531e] text-white text-[20px] leading-[24px] font-bold text-center -skew-x-6 shrink-0">S</div>
        <span className="ml-[6px] text-[15px] font-bold text-[#1470c8]">中</span>
        <span className="ml-[6px] text-[14px] font-bold text-[#1470c8] leading-none whitespace-nowrap">°,</span>
        <Smile size={17} strokeWidth={1.800} className="ml-[12px] text-[#1470c8]" />
        <Mic size={17} strokeWidth={2.400} className="ml-[5px] text-[#1470c8]" />
        <Keyboard size={18} strokeWidth={2} className="ml-[3px] text-[#1470c8]" />
        <svg width="17" height="17" viewBox="0 0 17 17" className="ml-[5px]"><circle cx="6" cy="4" r="3" fill="#b8c4d0" /><path d="M1 11c0-3 9-3 9 0v1H1z" fill="#b8c4d0" /><rect x="6" y="10" width="10" height="6" fill="#fff" stroke="#b8c4d0" /></svg>
        <Shirt size={17} fill="#1470c8" className="ml-[4px] text-[#1470c8]" />
        <Wrench size={15} fill="#1470c8" className="ml-[5px] text-[#1470c8]" />
      </div>

      {/* account row */}
      <div className="h-[31px] shrink-0 flex items-center pl-[937px] whitespace-nowrap">
        <div className="w-[187px] h-full bg-[#f6f6f6] flex items-center pl-[29px] text-[#5a3000]">如何处理异形柱中非封..</div>
        <div className="w-[4px]" />
        <svg width="16" height="18" viewBox="0 0 16 18" className="shrink-0 ml-[1px]"><rect width="16" height="18" rx="2" fill="#4a9ad4" /><circle cx="8" cy="7" r="3" fill="#fff" /><path d="M3 14c0-3 10-3 10 0z" fill="#fff" /></svg>
        <span className="ml-[4px] w-[78px] text-[12.500px] shrink-0">13907298339</span>
        <Caret className="ml-[6px]" />
        <span className="ml-[8px] w-[48px] shrink-0">造价豆:0</span>
        <Bell size={17} fill="#1d7fdc" className="ml-[7px] text-[#1d7fdc] shrink-0" />
        <More className="ml-[36px] -translate-y-[5px]" />
      </div>

      {/* main toolbar */}
      <div className="h-[30px] shrink-0 flex whitespace-nowrap">
        <div className="w-[150px] ml-[2px] h-full bg-[#f6f6f6] flex items-center pl-[3px] pb-[3px] shrink-0">
          <Tool w="w-[51px]" icon="new" label="新建" />
          <Tool w="w-[53px]" icon="open" label="打开" caret />
          <More className="ml-[34px] -mt-[8px]" />
        </div>
        <div className="w-[548px] h-full bg-[#f6f6f6] flex items-center pl-[5px] pb-[3px] shrink-0">
          <Tool w="w-[53px]" icon="define" label="定义" />
          <div className="flex items-center w-[73px] shrink-0">
            <span className="w-[17px] shrink-0 text-[14px] font-bold font-['Liberation_Serif',serif] text-center">Σ</span>
            <span>汇总计算</span>
          </div>
          <Tool w="w-[64px]" icon="cloud" label="云检查" />
          <Tool w="w-[74px]" icon="flat" label="平齐板顶" gray />
          <Tool w="w-[76px]" icon="binoc" label="查找图元" />
          <Tool w="w-[87px]" icon="glass" label="查看钢筋量" />
          <Tool w="w-[70px]" icon="batch" label="批量选择" />
          <More className="ml-auto mr-[1px] -mt-[8px]" />
        </div>
        <div className="flex-1 ml-[4px] h-full bg-[#f6f6f6] flex items-center pb-[3px] min-w-0">
          <div className="w-[63px] h-[25px] bg-white flex items-center pl-[4px] shrink-0">
            <Svg name="cube" />
            <span className="ml-[2px]">三维</span>
            <Caret className="ml-[6px]" />
          </div>
          <div className="w-[4px] shrink-0" />
          <Tool w="w-[64px]" icon="top" label="俯视" caret />
          <Tool w="w-[74px]" icon="orbit" label="动态观察" />
          <Tool w="w-[75px]" icon="orbit0" label="局部三维" gray />
          <Sep w="w-[6px]" />
          <Tool w="w-[51px]" icon="full" label="全屏" />
          <Tool w="w-[64px]" icon="zoom" label="缩放" caret />
          <Tool w="w-[62px]" icon="pan" label="平移" caret />
          <Tool w="w-[83px]" icon="rot" label="屏幕旋转" caret caretMl="ml-[3px]" />
          <Sep w="w-[8px]" />
          <Tool w="w-[68px]" icon="floor" label="选择楼层" />
          <More className="ml-auto mr-[3px] -mt-[8px]" />
        </div>
      </div>

      {/* work area */}
      <div className="flex h-[622px] shrink-0">
        <NavTree />
        <div className="w-[5px] shrink-0" />
        <div className="flex-1 min-w-0 flex flex-col">
          <Toolbars />
          <Canvas />
          <SnapBar />
          <GridPanel />
        </div>
      </div>

      {/* status bar */}
      <div className="h-[20px] mt-[2px] shrink-0 flex gap-[2px] text-[12px]">
        <StatusCell w="w-[148px]"><Mix t="X=24017 Y=-566" /></StatusCell>
        <StatusCell w="w-[77px]"><Mix t="层高:2.8m" /></StatusCell>
        <StatusCell w="w-[98px]"><Mix t="底标高:20.35m" /></StatusCell>
        <StatusCell w="w-[48px]"><Mix t="1(1)" /></StatusCell>
        <StatusCell w="w-[914px]">按鼠标左键指定第一个角点，或拾取构件图元</StatusCell>
        <StatusCell w="w-[71px]"><Mix t="806.5 FPS" /></StatusCell>
      </div>

      <Taskbar />
    </div>
  );
}
